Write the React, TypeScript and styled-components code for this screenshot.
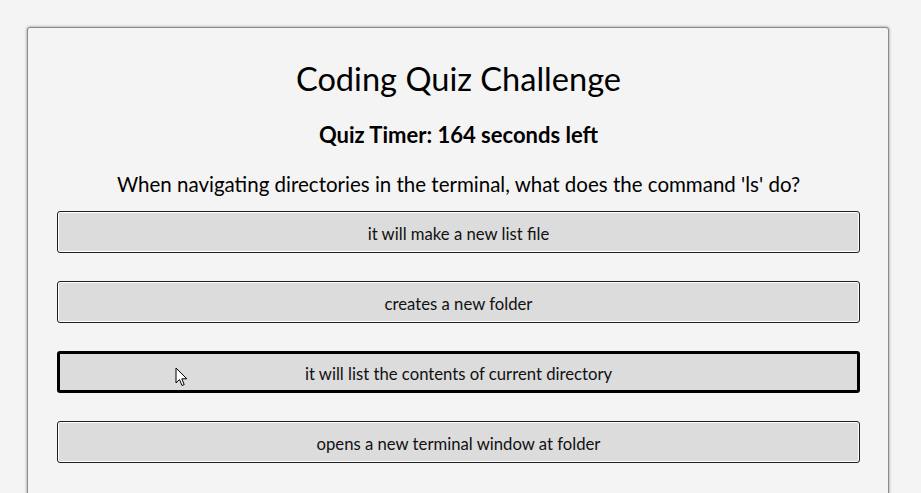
import React from "react";
import styled, { createGlobalStyle } from "styled-components";

const Global = createGlobalStyle`
  html, body { margin: 0; padding: 0; background: #f4f4f4; }
  body { font-family: Lato, "Liberation Sans", sans-serif; color: #000; overflow: hidden; }
`;

const Page = styled.div`
  padding: 27px 0 0 27px;
  height: 493px;
  box-sizing: border-box;
  overflow: hidden;
`;

const Card = styled.main`
  position: relative;
  width: 862px;
  height: 520px;
  box-sizing: border-box;
  border: 1px solid #8a8a8a;
  border-radius: 3px;
  box-shadow: 0 0 3px rgba(0, 0, 0, 0.45);
  background: #f4f4f4;
  padding: 0 28px 0 29px;
  display: flex;
  flex-direction: column;
  align-items: stretch;
`;

const Title = styled.h1`
  margin: 31px 0 0;
  font-size: 32.6px;
  font-weight: 400;
  line-height: 40px;
  text-align: center;
`;

const Timer = styled.h2`
  margin: 23px 0 0;
  font-size: 22px;
  font-weight: 700;
  line-height: 26px;
  text-align: center;
`;

const Question = styled.p`
  margin: 23px 0 0;
  font-size: 20.5px;
  line-height: 26px;
  text-align: center;
`;

const Answers = styled.div`
  margin-top: 14px;
  display: flex;
  flex-direction: column;
  gap: 28px;
`;

const Answer = styled.button<{ $focused?: boolean }>`
  height: 42px;
  box-sizing: border-box;
  width: 100%;
  background: #dcdcdc;
  border: ${(p) => (p.$focused ? "3px solid #000" : "1px solid #1e1e1e")};
  box-shadow: ${(p) => (p.$focused ? "none" : "inset 0 0 0 1px #fff")};
  border-radius: 3px;
  font-family: Lato, "Liberation Sans", sans-serif;
  font-size: 16.7px;
  color: #111;
  cursor: pointer;
  padding: 3px 0 0;
`;

const Cursor = styled.svg`
  position: absolute;
  left: 147px;
  top: 339px;
  pointer-events: none;
`;

const answers = [
  "it will make a new list file",
  "creates a new folder",
  "it will list the contents of current directory",
  "opens a new terminal window at folder",
];

export default function App() {
  return (
    <>
      <Global />
      <Page>
        <Card>
          <Title>Coding Quiz Challenge</Title>
          <Timer>Quiz Timer: 164 seconds left</Timer>
          <Question>
            When navigating directories in the terminal, what does the command 'ls' do?
          </Question>
          <Answers>
            {answers.map((a, i) => (
              <Answer key={a} $focused={i === 2}>
                {a}
              </Answer>
            ))}
          </Answers>
          <Cursor width="14" height="20" viewBox="0 0 14 20">
            <path
              d="M1 1 L1 16 L4.5 12.5 L7 18.5 L9.2 17.6 L6.8 11.8 L11.8 11.8 Z"
              fill="#fff"
              stroke="#000"
              strokeWidth="1"
              strokeLinejoin="round"
            />
          </Cursor>
        </Card>
      </Page>
    </>
  );
}
